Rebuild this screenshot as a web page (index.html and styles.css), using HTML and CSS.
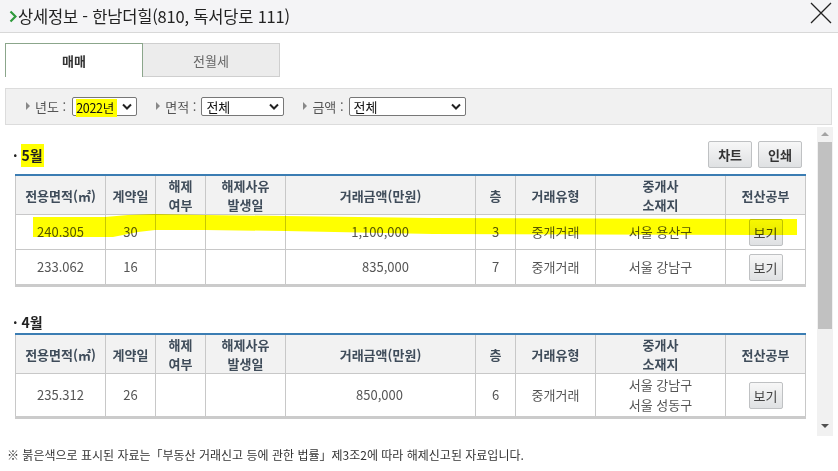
FILE: index.html
```html
<!DOCTYPE html>
<html lang="ko">
<head>
  <meta charset="UTF-8">
  <title>상세정보 - 한남더힐</title>
  <link rel="stylesheet" href="styles.css">
</head>
<body>
  <div class="popup">
    <div class="titlebar">
      <h1>
        <svg class="chev" width="8" height="13" viewBox="0 0 8 13"><path d="M1.5 1.5 L6.5 6.5 L1.5 11.5" fill="none" stroke="#2f9a3c" stroke-width="2.2"/></svg>
        상세정보 - 한남더힐(810, 독서당로 111)
      </h1>
      <svg class="close" width="22" height="22" viewBox="0 0 22 22"><path d="M1 1 L21 21 M21 1 L1 21" stroke="#222" stroke-width="1.3"/></svg>
    </div>

    <div class="tabs">
      <div class="tab on">매매</div>
      <div class="tab off">전월세</div>
    </div>

    <div class="filters">
      <span class="lbl">년도 :</span>
      <div class="sel w-year"><span class="hl">2022년</span><svg width="10" height="7" viewBox="0 0 10 7"><path d="M1 1.5 L5 5.5 L9 1.5" fill="none" stroke="#222" stroke-width="2"/></svg></div>
      <span class="lbl">면적 :</span>
      <div class="sel w-area"><span>전체</span><svg width="10" height="7" viewBox="0 0 10 7"><path d="M1 1.5 L5 5.5 L9 1.5" fill="none" stroke="#222" stroke-width="2"/></svg></div>
      <span class="lbl">금액 :</span>
      <div class="sel w-price"><span>전체</span><svg width="10" height="7" viewBox="0 0 10 7"><path d="M1 1.5 L5 5.5 L9 1.5" fill="none" stroke="#222" stroke-width="2"/></svg></div>
    </div>

    <div class="scrollbox">
      <div class="content">
        <div class="month-head">
          <span class="month">· <span class="hl">5월</span></span>
          <div class="btns">
            <button class="btn">차트</button>
            <button class="btn">인쇄</button>
          </div>
        </div>
        <div class="tbl-wrap">
          <table class="deal">
            <colgroup>
              <col style="width:90px"><col style="width:50px"><col style="width:50px"><col style="width:80px"><col style="width:190px"><col style="width:40px"><col style="width:80px"><col style="width:130px"><col style="width:80px">
            </colgroup>
            <tr>
              <th>전용면적(㎡)</th><th>계약일</th><th>해제<br>여부</th><th>해제사유<br>발생일</th><th>거래금액(만원)</th><th>층</th><th>거래유형</th><th>중개사<br>소재지</th><th>전산공부</th>
            </tr>
            <tr>
              <td>240.305</td><td>30</td><td></td><td></td><td class="amt">1,100,000</td><td>3</td><td>중개거래</td><td>서울 용산구</td><td><button class="view">보기</button></td>
            </tr>
            <tr>
              <td>233.062</td><td>16</td><td></td><td></td><td class="amt">835,000</td><td>7</td><td>중개거래</td><td>서울 강남구</td><td><button class="view">보기</button></td>
            </tr>
          </table>
          <div class="marker"></div>
        </div>

        <div class="month-head second">
          <span class="month">· 4월</span>
        </div>
        <table class="deal">
          <colgroup>
            <col style="width:90px"><col style="width:50px"><col style="width:50px"><col style="width:80px"><col style="width:190px"><col style="width:40px"><col style="width:80px"><col style="width:130px"><col style="width:80px">
          </colgroup>
          <tr>
            <th>전용면적(㎡)</th><th>계약일</th><th>해제<br>여부</th><th>해제사유<br>발생일</th><th>거래금액(만원)</th><th>층</th><th>거래유형</th><th>중개사<br>소재지</th><th>전산공부</th>
          </tr>
          <tr class="tall">
            <td>235.312</td><td>26</td><td></td><td></td><td class="amt short">850,000</td><td>6</td><td>중개거래</td><td>서울 강남구<br>서울 성동구</td><td><button class="view">보기</button></td>
          </tr>
        </table>
      </div>
      <div class="scrollbar">
        <span class="arrow up"></span>
        <span class="thumb"></span>
        <span class="track"></span>
        <span class="arrow down"></span>
      </div>
    </div>

    <p class="note">※ 붉은색으로 표시된 자료는「부동산 거래신고 등에 관한 법률」제3조2에 따라 해제신고된 자료입니다.</p>
  </div>
</body>
</html>
```

FILE: styles.css
```css
body {
  margin: 0;
  background: #fff;
  color: #333;
  font-family: "Noto Sans CJK KR", "Noto Sans", sans-serif;
}
.popup {
  width: 838px;
  height: 471px;
  overflow: hidden;
}
.titlebar {
  height: 32px;
  background: #f4f4f6;
  border-bottom: 1px solid #d8d8d8;
  display: flex;
  align-items: center;
  justify-content: space-between;
  padding: 0 6px 0 9px;
}
.titlebar h1 {
  margin: 0;
  font-size: 16.5px;
  letter-spacing: -0.2px;
  font-weight: normal;
  color: #222;
  line-height: 22px;
  display: flex;
  align-items: center;
}
.chev {
  margin-right: 1px;
}
.close {
  margin-top: -7px;
}
.tabs {
  display: flex;
  margin: 10px 0 0 5px;
}
.tab {
  width: 136px;
  height: 32px;
  display: flex;
  align-items: center;
  justify-content: center;
  font-size: 13px;
}
.tab.on {
  border: 1px solid #8ba68b;
  border-bottom: none;
  height: 33px;
  font-weight: bold;
  color: #333;
  background: #fff;
}
.tab.off {
  border: 1px solid #cfcfcf;
  border-left: none;
  background: #ececec;
  color: #666;
}
.filters {
  margin: 11px 6px 0 5px;
  height: 35px;
  border: 1px solid #dcdcdc;
  background: #f1f1f1;
  display: flex;
  align-items: center;
  padding-left: 20px;
}
.lbl {
  font-size: 13px;
  color: #555;
  margin-right: 5px;
  position: relative;
  padding-left: 9px;
  white-space: nowrap;
}
.lbl::before {
  content: "";
  position: absolute;
  left: 0;
  top: 5px;
  border-left: 4px solid #888;
  border-top: 4px solid transparent;
  border-bottom: 4px solid transparent;
}
.sel {
  height: 17px;
  border: 1px solid #777;
  border-radius: 2px;
  background: #fff;
  display: flex;
  align-items: center;
  justify-content: space-between;
  padding: 0 4px 0 4px;
  font-size: 13px;
  color: #111;
  margin-right: 19px;
  white-space: nowrap;
}
.sel svg {
  flex-shrink: 0;
}
.w-year { width: 56px; padding-left: 3px; margin-left: 1px; }
.w-area { width: 73px; }
.w-price { width: 107px; }
.sel .hl {
  background: #ffff00;
  line-height: 18px;
  padding-right: 3px;
  margin-top: 3px;
  font-size: 12.5px;
  letter-spacing: -0.3px;
}
.scrollbox {
  margin: 2px 6px 0 5px;
  height: 309px;
  display: flex;
}
.content {
  flex: 1;
  padding: 14px 11px 0 10px;
}
.month-head {
  display: flex;
  justify-content: space-between;
  align-items: center;
  height: 27px;
  margin-bottom: 6px;
}
.month-head.second {
  margin-top: 25px;
  height: 20px;
  margin-bottom: 1px;
}
.month {
  font-size: 14px;
  font-weight: bold;
  color: #222;
  margin-left: -2px;
}
.month .hl {
  background: #ffff00;
  padding: 1px 1px 2px 0;
}
.btns {
  display: flex;
  gap: 6px;
  margin-right: 4px;
}
.btn, .view {
  font-family: inherit;
  font-size: 13px;
  font-weight: bold;
  color: #333;
  background: linear-gradient(#f7f7f7, #dfe1e3);
  border: 1px solid #bfc1c3;
  border-radius: 2px;
  height: 27px;
  padding: 0 9px;
  cursor: pointer;
}
.view {
  font-weight: normal;
  color: #444;
  width: 34px;
  padding: 0;
}
.tbl-wrap {
  position: relative;
}
.deal {
  width: 790px;
  border-collapse: collapse;
  table-layout: fixed;
  border-top: 2px solid #3b7db3;
  border-bottom: 3px solid #cbcbcb;
}
.deal th, .deal td {
  border: 1px solid #c8c8c8;
  text-align: center;
  font-size: 13px;
  padding: 0;
}
.deal th {
  background: #f2f2f2;
  color: #3f4c5a;
  height: 38px;
  line-height: 19px;
}
.deal td {
  color: #555;
  height: 34px;
  line-height: 20px;
}
.deal .tall td {
  height: 42px;
}
.deal td.amt {
  text-align: right;
  padding-right: 66px;
}
.deal td.amt.short {
  padding-right: 72px;
}
.marker {
  position: absolute;
  left: 18px;
  top: 40px;
  width: 764px;
  height: 23px;
  background: #ffff00;
  mix-blend-mode: multiply;
  clip-path: polygon(0 3px, 72px 3px, 95px 1px, 122px 0, 172px 1px, 252px 2px, 400px 4px, 764px 5px, 764px 21px, 400px 20px, 252px 17px, 172px 16px, 122px 16px, 105px 18px, 80px 23px, 0 23px);
}
.scrollbar {
  width: 16px;
  background: #f1f1f1;
  display: flex;
  flex-direction: column;
  align-items: center;
}
.arrow {
  height: 15px;
  width: 16px;
  position: relative;
}
.arrow::before {
  content: "";
  position: absolute;
  left: 4px;
  border-left: 4px solid transparent;
  border-right: 4px solid transparent;
}
.arrow.up::before {
  top: 5px;
  border-bottom: 4px solid #a3a3a3;
}
.arrow.down::before {
  top: 3px;
  border-top: 4px solid #505050;
}
.thumb {
  width: 14px;
  height: 187px;
  background: #c1c1c1;
}
.track {
  flex: 1;
}
.note {
  margin: 0;
  padding: 11px 0 0 7px;
  font-size: 12px;
  color: #333;
  line-height: 16px;
}
```
